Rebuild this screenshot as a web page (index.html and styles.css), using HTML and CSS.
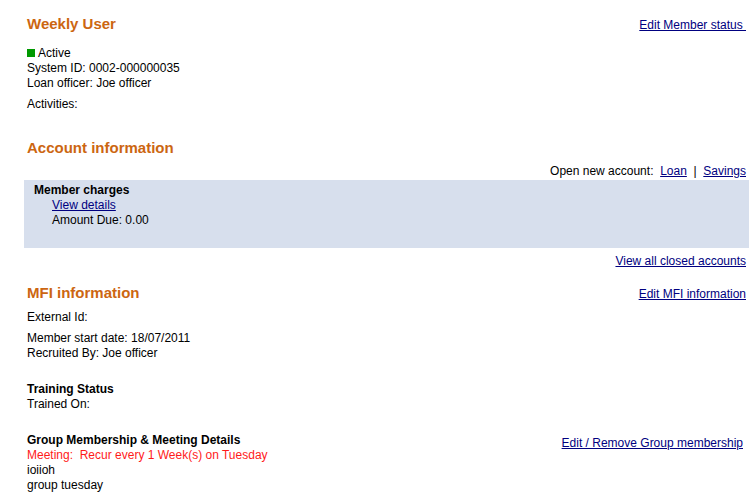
FILE: index.html
```html
<!DOCTYPE html>
<html>
<head>
<meta charset="utf-8">
<link rel="stylesheet" href="styles.css">
</head>
<body>
<div class="page">
  <div class="row head-row">
    <h1 class="title">Weekly User</h1>
    <a class="link" href="#">Edit Member status&nbsp;</a>
  </div>
  <div class="pad status-block">
    <div class="status"><span class="dot"></span>Active</div>
    <div>System ID: 0002-000000035</div>
    <div>Loan officer: Joe officer</div>
  </div>
  <div class="pad activities">Activities:</div>

  <h1 class="title pad section-title account-title">Account information</h1>
  <div class="pad right open-new">Open new account:&nbsp; <a class="link" href="#">Loan</a>&nbsp; |&nbsp; <a class="link" href="#">Savings</a></div>
  <div class="charges">
    <div class="bold">Member charges</div>
    <div class="indent"><a class="link" href="#">View details</a></div>
    <div class="indent">Amount Due: 0.00</div>
  </div>
  <div class="pad right closed"><a class="link" href="#">View all closed accounts</a></div>

  <div class="row head-row mfi-row">
    <h1 class="title">MFI information</h1>
    <a class="link" href="#">Edit MFI information</a>
  </div>
  <div class="pad ext">External Id:</div>
  <div class="pad start">
    <div>Member start date: 18/07/2011</div>
    <div>Recruited By: Joe officer</div>
  </div>
  <div class="pad training">
    <div class="bold">Training Status</div>
    <div>Trained On:</div>
  </div>
  <div class="row pad group">
    <div>
      <div class="bold">Group Membership &amp; Meeting Details</div>
      <div class="meeting">Meeting:&nbsp; Recur every 1 Week(s) on Tuesday</div>
      <div>ioiioh</div>
      <div>group tuesday</div>
    </div>
    <a class="link group-link" href="#">Edit / Remove Group membership</a>
  </div>
</div>
</body>
</html>
```

FILE: styles.css
```css
html, body {
  margin: 0;
  padding: 0;
  background: #ffffff;
}
.page {
  margin: 0 3px 0 24px;
  padding-top: 15px;
  font-family: "Liberation Sans", Arial, sans-serif;
  font-size: 12px;
  line-height: 15px;
  color: #000000;
}
.pad {
  padding: 0 3px;
}
.row {
  display: flex;
  justify-content: space-between;
}
.head-row {
  padding: 0 3px;
  align-items: baseline;
}
.title {
  margin: 0;
  font-size: 15px;
  line-height: 18px;
  font-weight: bold;
  color: #cc6611;
}
.link {
  color: #000080;
  text-decoration: underline;
}
.bold {
  font-weight: bold;
}
.right {
  text-align: right;
}
.status-block {
  margin-top: 13px;
}
.status {
  display: flex;
  align-items: center;
}
.dot {
  display: inline-block;
  width: 8px;
  height: 8px;
  background: #009900;
  margin-right: 3px;
  margin-top: -1px;
}
.activities {
  margin-top: 6px;
}
.account-title {
  margin-top: 27px;
}
.open-new {
  margin-top: 7px;
}
.charges {
  margin-top: 1px;
  background: #d7dfed;
  padding: 3px 0 20px 10px;
}
.indent {
  padding-left: 18px;
}
.closed {
  margin-top: 6px;
}
.mfi-row {
  margin-top: 15px;
}
.ext {
  margin-top: 8px;
}
.start {
  margin-top: 6px;
}
.training {
  margin-top: 21px;
}
.group {
  margin-top: 21px;
  align-items: flex-start;
  padding-right: 6px;
}
.group-link {
  margin-top: 3px;
}
.meeting {
  color: #ff1a1a;
}
```
